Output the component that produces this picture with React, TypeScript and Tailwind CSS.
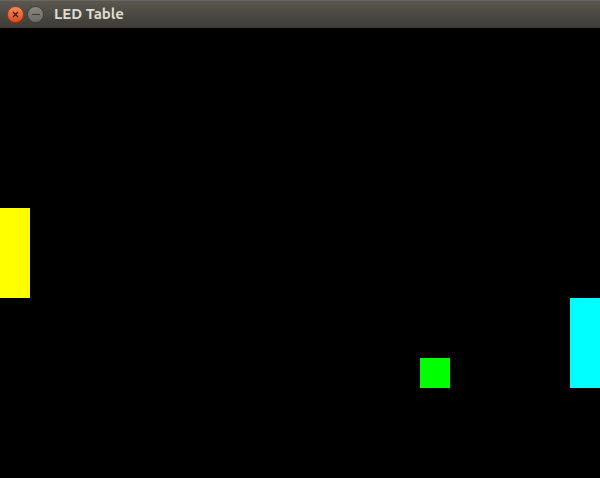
import React from "react";

const COLS = 20;
const ROWS = 15;

type Cell = { col: number; row: number; color: string };

// lit cells of the table: two paddles and the ball
const lit: Cell[] = [
  { col: 0, row: 6, color: "bg-[#ffff00]" },
  { col: 0, row: 7, color: "bg-[#ffff00]" },
  { col: 0, row: 8, color: "bg-[#ffff00]" },
  { col: 19, row: 9, color: "bg-[#00ffff]" },
  { col: 19, row: 10, color: "bg-[#00ffff]" },
  { col: 19, row: 11, color: "bg-[#00ffff]" },
  { col: 14, row: 11, color: "bg-[#00ff00]" },
];

function cellColor(col: number, row: number) {
  const hit = lit.find((c) => c.col === col && c.row === row);
  return hit ? hit.color : "bg-black";
}

export default function App() {
  const cells = [];
  for (let r = 0; r < ROWS; r++) {
    for (let c = 0; c < COLS; c++) {
      cells.push(<div key={`${r}-${c}`} className={`w-[30px] h-[30px] ${cellColor(c, r)}`} />);
    }
  }

  return (
    <div className="w-[600px] h-[478px] flex flex-col bg-black overflow-hidden">
      <div className="h-[28px] flex items-center bg-gradient-to-b from-[#5a574f] to-[#3c3b37] border-t border-[#6a675e]">
        <div className="flex items-center gap-[3px] pl-[7px]">
          <div className="w-[17px] h-[17px] rounded-full bg-gradient-to-b from-[#f48a5f] to-[#df4a16] border border-[#9c3a12] flex items-center justify-center">
            <svg width="7" height="7" viewBox="0 0 7 7">
              <path d="M1 1L6 6M6 1L1 6" stroke="#4a1a08" strokeWidth="1.3" />
            </svg>
          </div>
          <div className="w-[17px] h-[17px] rounded-full bg-gradient-to-b from-[#8a8880] to-[#6b6a64] border border-[#3f3e3a] flex items-center justify-center">
            <div className="w-[8px] h-[1.5px] bg-[#3a3935]" />
          </div>
        </div>
        <span className="ml-[10px] text-[15px] font-bold text-[#dfdbd2] font-['Ubuntu','DejaVu_Sans',sans-serif]">
          LED Table
        </span>
      </div>
      <div className="grid grid-cols-[repeat(20,30px)] grid-rows-[repeat(15,30px)]">{cells}</div>
    </div>
  );
}
